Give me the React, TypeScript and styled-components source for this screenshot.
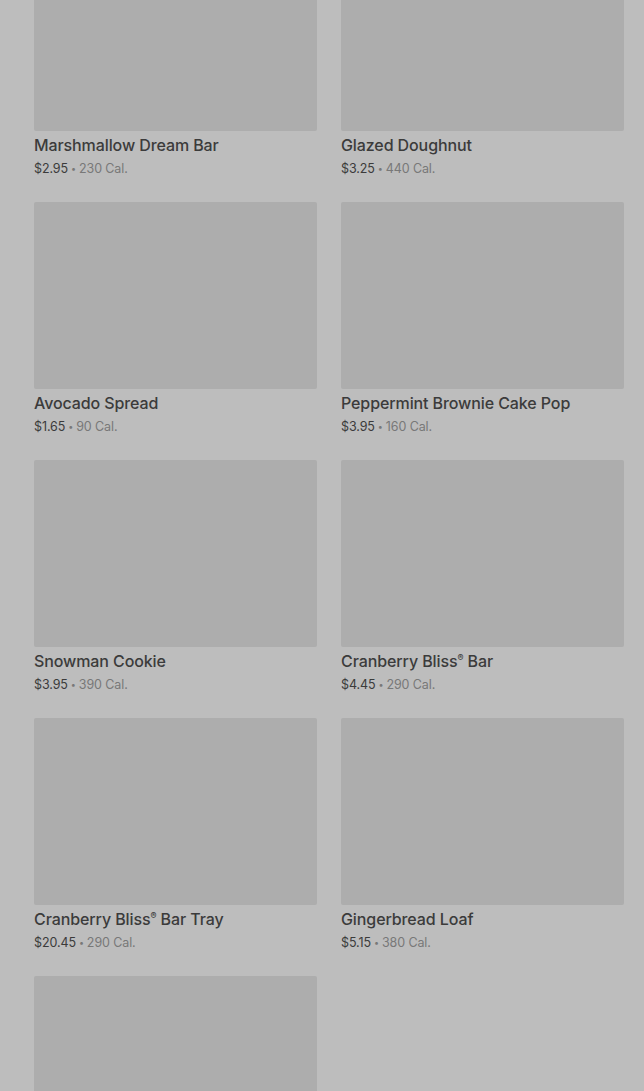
import React from "react";
import styled, { createGlobalStyle } from "styled-components";

const GlobalStyle = createGlobalStyle`
  html, body {
    margin: 0;
    padding: 0;
    background: #bdbdbd;
    height: 1091px;
    overflow: hidden;
  }
  body {
    font-family: Inter, "Noto Sans", sans-serif;
  }
`;

const Grid = styled.div`
  display: grid;
  grid-template-columns: 283px 283px;
  column-gap: 24px;
  row-gap: 23px;
  padding: 0 20px 0 34px;
  margin-top: -56px;
`;

const Card = styled.div`
  display: flex;
  flex-direction: column;
  cursor: pointer;
`;

const Thumb = styled.div`
  height: 187px;
  background: #adadad;
  border-radius: 2px;
`;

const Title = styled.p`
  margin: 4px 0 0;
  height: 20px;
  font-size: 16px;
  line-height: 20px;
  font-weight: 500;
  color: #3b3b3b;
  letter-spacing: -0.1px;
  sup {
    font-size: 9px;
    line-height: 0;
    vertical-align: 6px;
  }
`;

const Meta = styled.p`
  margin: 4px 0 0;
  height: 20px;
  font-size: 12.5px;
  line-height: 20px;
  color: #787878;
  letter-spacing: -0.1px;
  .price {
    color: #3b3b3b;
  }
  .dot {
    display: inline-block;
    margin: 0 3px;
    font-size: 9px;
    line-height: 0;
    vertical-align: 1px;
  }
`;

type Item = { name: string; price: string; cal: number };

const items: Item[] = [
  { name: "Marshmallow Dream Bar", price: "$2.95", cal: 230 },
  { name: "Glazed Doughnut", price: "$3.25", cal: 440 },
  { name: "Avocado Spread", price: "$1.65", cal: 90 },
  { name: "Peppermint Brownie Cake Pop", price: "$3.95", cal: 160 },
  { name: "Snowman Cookie", price: "$3.95", cal: 390 },
  { name: "Cranberry Bliss® Bar", price: "$4.45", cal: 290 },
  { name: "Cranberry Bliss® Bar Tray", price: "$20.45", cal: 290 },
  { name: "Gingerbread Loaf", price: "$5.15", cal: 380 },
  { name: "", price: "", cal: 0 },
];

const renderName = (name: string) =>
  name.split("®").map((part, i, arr) => (
    <React.Fragment key={i}>
      {part}
      {i < arr.length - 1 && <sup>®</sup>}
    </React.Fragment>
  ));

const ProductCard = ({ name, price, cal }: Item) => (
  <Card>
    <Thumb />
    {name && (
      <>
        <Title>{renderName(name)}</Title>
        <Meta>
          <span className="price">{price}</span>
          <span className="dot">•</span>
          {`${cal} Cal.`}
        </Meta>
      </>
    )}
  </Card>
);

export default function App() {
  return (
    <>
      <GlobalStyle />
      <Grid>
        {items.map((item, i) => (
          <ProductCard key={i} {...item} />
        ))}
      </Grid>
    </>
  );
}
